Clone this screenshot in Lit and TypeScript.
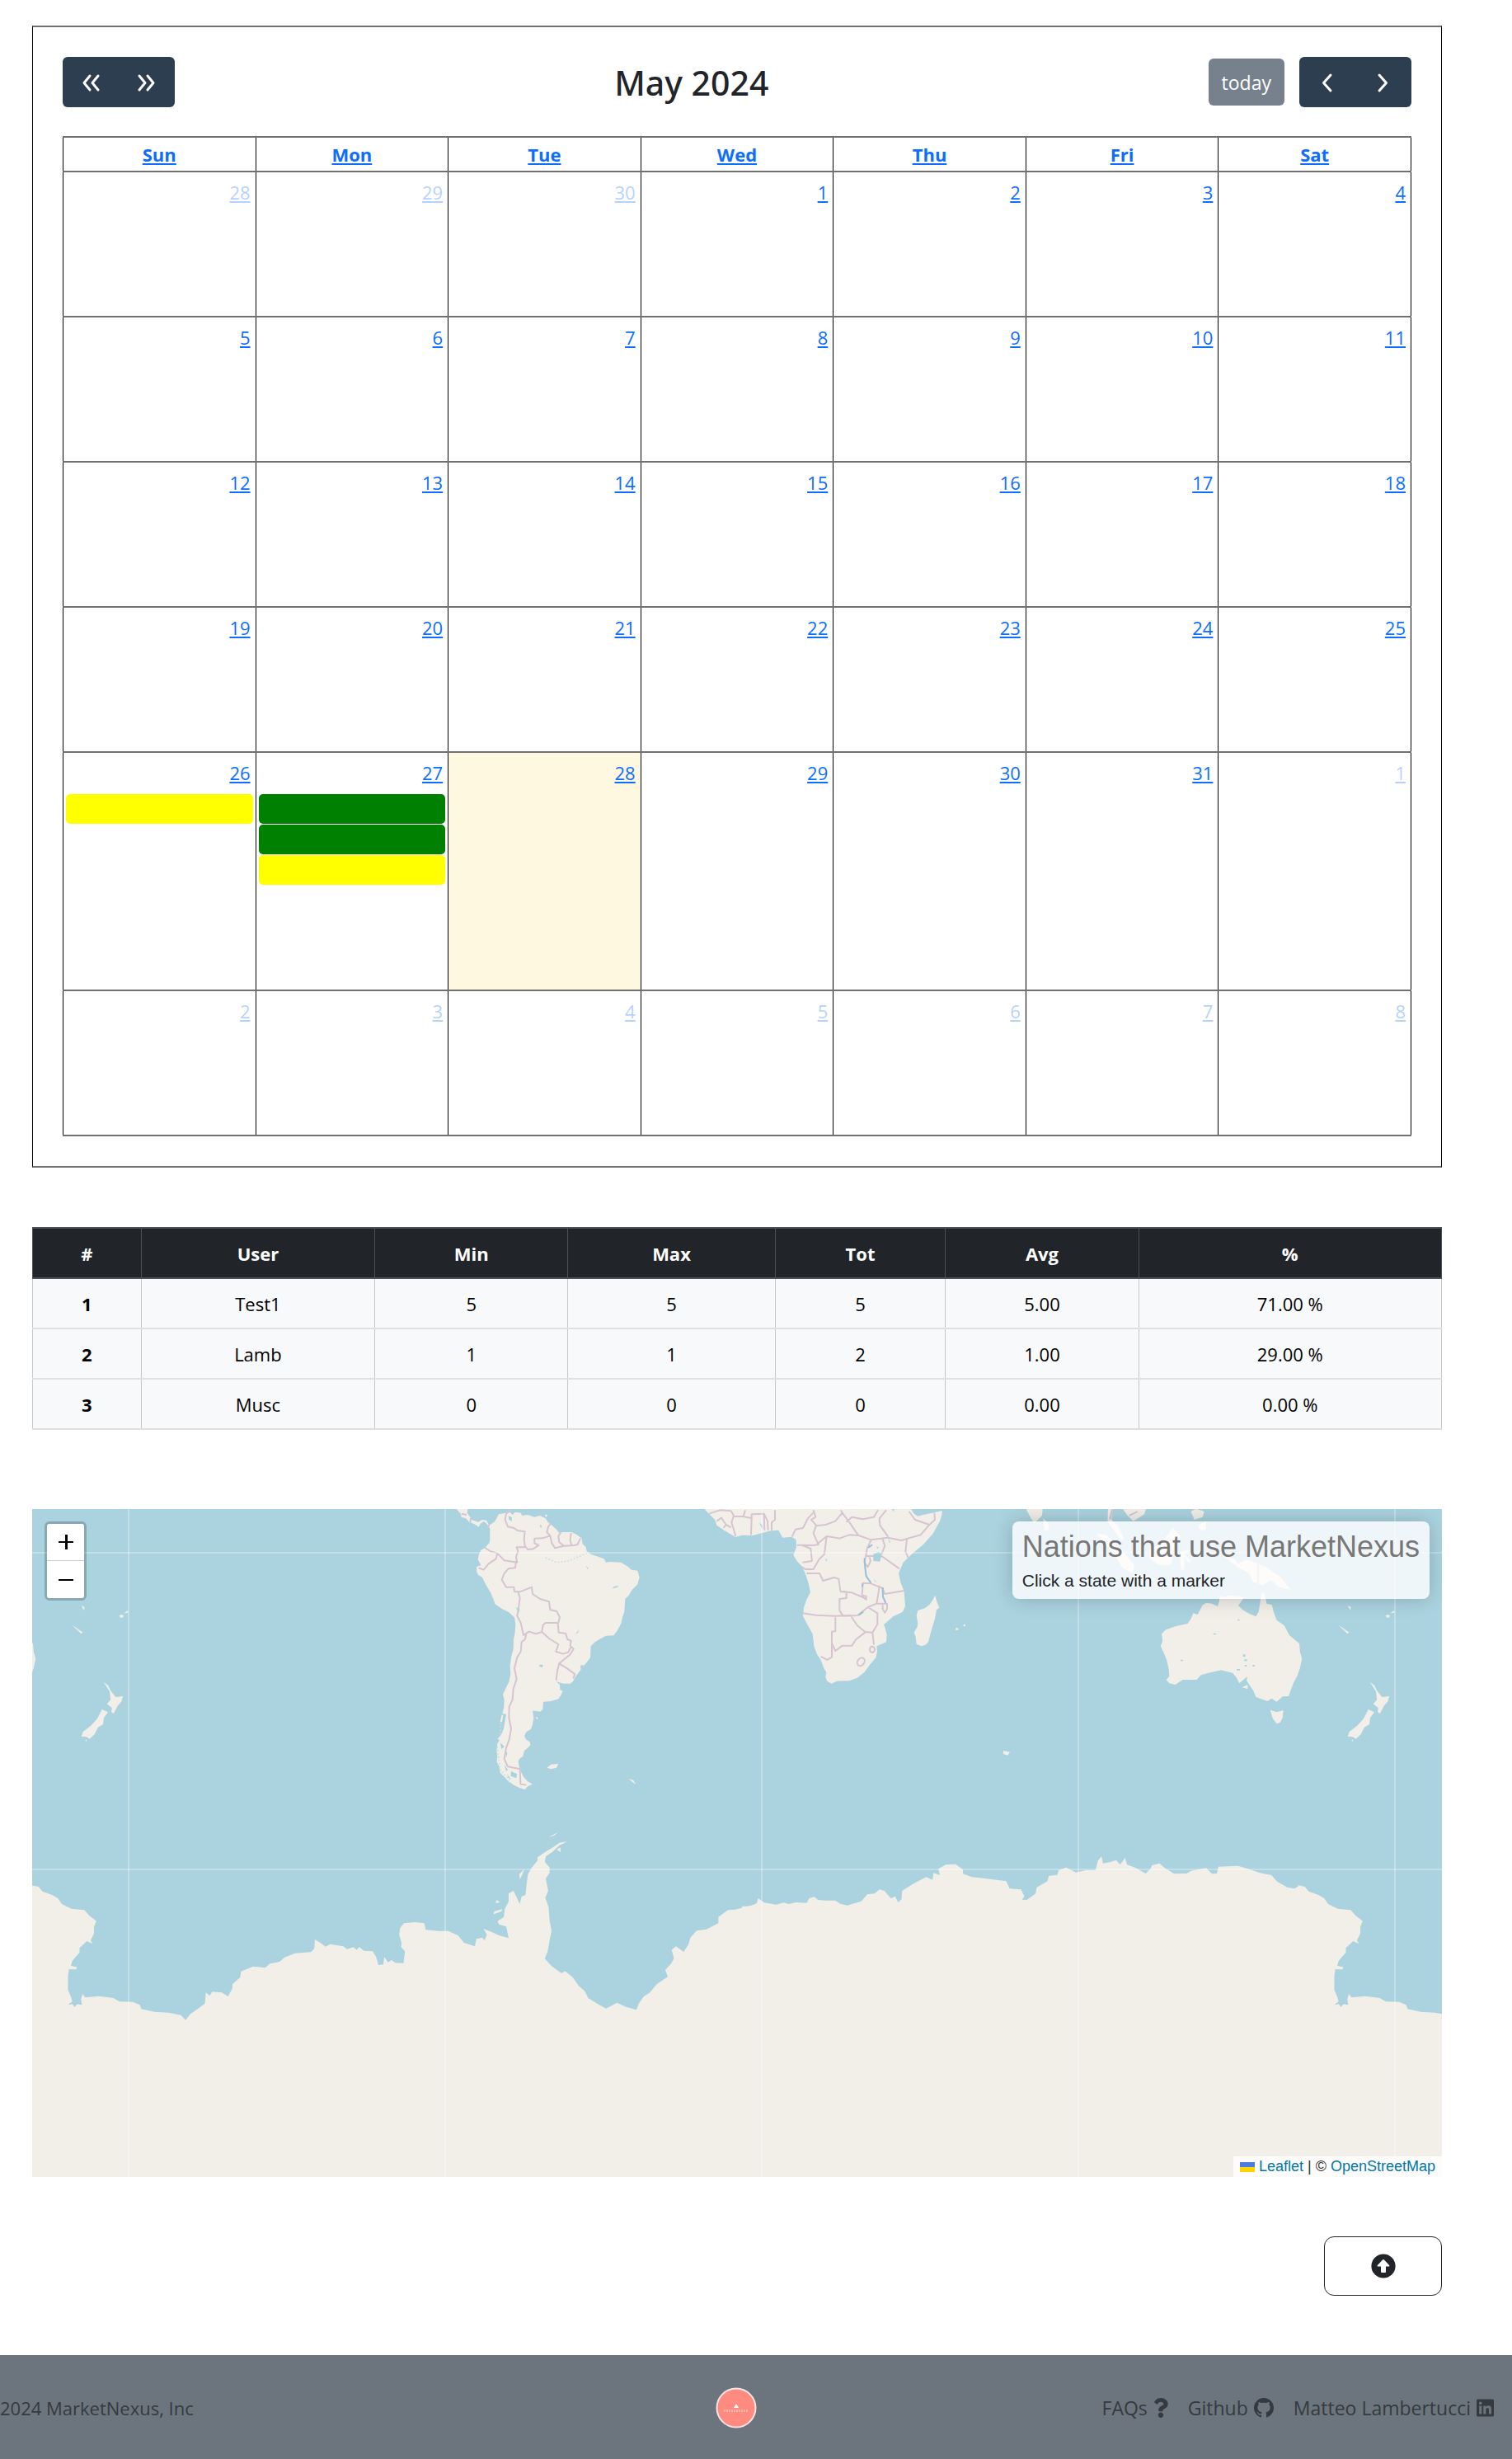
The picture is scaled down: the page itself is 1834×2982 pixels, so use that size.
import { LitElement, html, svg, css, nothing } from "lit";
import { customElement } from "lit/decorators.js";
import { classMap } from "lit/directives/class-map.js";

const WEEKDAYS = ["Sun", "Mon", "Tue", "Wed", "Thu", "Fri", "Sat"];

interface Day {
  label: number;
  other: boolean;
  today: boolean;
  events: string[];
}

/** Six weeks starting on Sunday 28 April 2024. */
function buildWeeks(): Day[][] {
  const events: Record<string, string[]> = {
    "4-26": ["yellow"],
    "4-27": ["green", "green", "yellow"],
  };
  return Array.from({ length: 6 }, (_, w) =>
    Array.from({ length: 7 }, (_, d) => {
      const date = new Date(2024, 3, 28 + w * 7 + d);
      return {
        label: date.getDate(),
        other: date.getMonth() !== 4,
        today: date.getMonth() === 4 && date.getDate() === 28,
        events: events[`${date.getMonth()}-${date.getDate()}`] ?? [],
      };
    })
  );
}

@customElement("market-calendar")
export class MarketCalendar extends LitElement {
  static styles = css`
    :host {
      display: block;
      box-sizing: border-box;
      border-style: solid;
      border-width: 2px 1px;
      border-color: #707070 #000;
      padding: 36px;
    }
    .toolbar {
      display: flex;
      align-items: center;
      justify-content: space-between;
      margin-bottom: 35px;
    }
    .title {
      margin: 0;
      font-family: "Noto Sans", "Open Sans", sans-serif;
      font-size: 41px;
      font-weight: 500;
      line-height: 48px;
      color: #212529;
    }
    .right {
      display: flex;
      align-items: center;
      gap: 18px;
    }
    .group {
      display: flex;
      border-radius: 6px;
      overflow: hidden;
    }
    button {
      border: 0;
      margin: 0;
      padding: 0;
      font: inherit;
      color: #fff;
      background: #2c3e50;
    }
    .nav {
      display: flex;
      align-items: center;
      justify-content: center;
      width: 68px;
      height: 61px;
    }
    .nav svg {
      width: 36px;
      height: 36px;
      fill: none;
      stroke: #fff;
      stroke-width: 3;
      stroke-linecap: round;
      stroke-linejoin: round;
    }
    .today-btn {
      height: 57px;
      padding: 0 16px;
      border-radius: 6px;
      font-size: 23px;
      background: #76818d;
    }
    table {
      width: 100%;
      table-layout: fixed;
      border-collapse: collapse;
    }
    th,
    td {
      padding: 0;
      border-style: solid;
      border-width: 2px 1px;
      border-color: #707070 #000;
      vertical-align: top;
    }
    .head {
      height: 42px;
    }
    .head th {
      vertical-align: middle;
      line-height: 36px;
    }
    .week {
      height: 176px;
    }
    .week.busy {
      height: 289px;
    }
    a {
      color: #0d6efd;
    }
    .num {
      padding: 6px;
      text-align: right;
      line-height: 36px;
    }
    .other .num {
      opacity: 0.3;
    }
    .today {
      background: #fff8e1;
    }
    .events {
      display: grid;
      gap: 1px;
      margin: 2px 3px 0;
    }
    .event {
      height: 36px;
      border-radius: 5px;
    }
    .yellow {
      background: #ff0;
    }
    .green {
      background: #008000;
    }
  `;

  private weeks = buildWeeks();

  private icon(d: string) {
    return html`<svg viewBox="0 0 36 36" aria-hidden="true"><path d=${d}></path></svg>`;
  }

  render() {
    return html`
      <div class="toolbar">
        <div class="group">
          <button class="nav" aria-label="Previous year">
            ${this.icon("M17 10L10 18.500L17 27M27 10L20 18.500L27 27")}
          </button>
          <button class="nav" aria-label="Next year">
            ${this.icon("M9 10L16 18.500L9 27M19 10L26 18.500L19 27")}
          </button>
        </div>
        <h2 class="title">May 2024</h2>
        <div class="right">
          <button class="today-btn">today</button>
          <div class="group">
            <button class="nav" aria-label="Previous month">
              ${this.icon("M22 9L13.500 18.500L22 28")}
            </button>
            <button class="nav" aria-label="Next month">
              ${this.icon("M13 9L21.500 18.500L13 28")}
            </button>
          </div>
        </div>
      </div>
      <table>
        <thead>
          <tr class="head">
            ${WEEKDAYS.map((d) => html`<th scope="col"><a href="#">${d}</a></th>`)}
          </tr>
        </thead>
        <tbody>
          ${this.weeks.map(
            (week) => html`<tr
              class=${classMap({ week: true, busy: week.some((d) => d.events.length > 0) })}
            >
              ${week.map(
                (d) => html`<td class=${classMap({ other: d.other, today: d.today })}>
                  <div class="num"><a href="#">${d.label}</a></div>
                  ${d.events.length
                    ? html`<div class="events">
                        ${d.events.map((e) => html`<div class="event ${e}"></div>`)}
                      </div>`
                    : nothing}
                </td>`
              )}
            </tr>`
          )}
        </tbody>
      </table>
    `;
  }
}

@customElement("market-stats")
export class MarketStats extends LitElement {
  static styles = css`
    :host {
      display: block;
    }
    table {
      width: 100%;
      table-layout: fixed;
      border-collapse: collapse;
      text-align: center;
      line-height: 36px;
    }
    .c-id {
      width: 7.7%;
    }
    .c-user {
      width: 16.6%;
    }
    .c-min {
      width: 13.7%;
    }
    .c-max {
      width: 14.700%;
    }
    .c-tot {
      width: 12.1%;
    }
    .c-avg {
      width: 13.7%;
    }
    tr {
      height: 61px;
    }
    th,
    td {
      padding: 0 12px;
      border-style: solid;
      border-width: 2px 1px;
    }
    thead th {
      color: #fff;
      background: #212529;
      border-color: #4d5154;
    }
    tbody th,
    tbody td {
      color: #000;
      background: #f8f9fa;
      border-color: #dfe0e1 #c6c7c8;
    }
  `;

  private cols = ["#", "User", "Min", "Max", "Tot", "Avg", "%"];
  private rows = [
    ["1", "Test1", "5", "5", "5", "5.00", "71.00 %"],
    ["2", "Lamb", "1", "1", "2", "1.00", "29.00 %"],
    ["3", "Musc", "0", "0", "0", "0.00", "0.00 %"],
  ];

  render() {
    return html`<table>
      <colgroup>
        <col class="c-id" />
        <col class="c-user" />
        <col class="c-min" />
        <col class="c-max" />
        <col class="c-tot" />
        <col class="c-avg" />
        <col />
      </colgroup>
      <thead>
        <tr>
          ${this.cols.map((c) => html`<th scope="col">${c}</th>`)}
        </tr>
      </thead>
      <tbody>
        ${this.rows.map(
          ([id, ...rest]) => html`<tr>
            <th scope="row">${id}</th>
            ${rest.map((v) => html`<td>${v}</td>`)}
          </tr>`
        )}
      </tbody>
    </table>`;
  }
}

const SOUTH_AMERICA =
  "M40 50L58 70L58 80L75 85L88 98L105 105L122 116L128 104L140 97L150 103L156 112L163 122L163 165L160 175L145 192L130 200L123 215L119 235L125 245L130 255L114 262L115 280L120 290L135 300L150 330L165 355L175 378L182 397L205 413L230 425L252 445L256 470L254 500L249 525L248 560L240 590L236 625L238 650L232 680L222 700L210 725L215 745L214 770L208 795L222 797L218 820L213 850L205 870L190 888L198 890L190 905L187 930L190 950L188 970L197 990L200 1010L215 1025L230 1042L250 1055L270 1065L290 1072L300 1060L318 1052L300 1042L285 1025L275 1005L270 990L266 970L270 960L283 950L288 930L300 920L310 910L308 898L295 890L288 877L295 862L312 852L318 835L322 810L318 785L330 785L345 788L355 780L357 752L385 750L412 742L420 730L428 713L418 708L417 690L403 678L430 686L455 686L465 678L475 660L490 640L510 615L528 592L530 550L545 535L565 523L585 512L613 511L625 495L640 468L645 445L652 425L655 378L668 365L680 345L700 325L707 300L700 275L678 272L660 257L640 245L600 243L585 245L578 232L550 222L530 215L515 205L512 190L500 178L497 158L480 145L460 135L430 135L415 138L405 125L390 112L375 100L365 85L345 75L325 80L300 72L280 75L275 65L255 62L245 72L235 62L220 65L195 70L187 85L180 97L160 110L150 92L135 90L120 98L95 90L92 82L80 65L82 50Z";
const SOUTH_AMERICA_BORDERS =
  "M240 55L222 68L218 90L228 115L250 120L265 130L290 133L287 160L290 185L300 198L320 196L340 183L325 175L325 158L355 157L382 148L370 135L375 115L385 103M382 148L388 175L400 193L432 185L470 183L482 180L492 158M432 185L415 172L412 150L420 137M458 138L455 165L460 183M295 190L260 190L265 205L258 225L262 245L215 238L190 212L165 205L145 192M190 212L185 232L158 250L140 272L122 265M258 240L255 265L230 268L215 285L206 308L222 335L250 335L252 352L272 352L315 335L318 360L345 378L378 388L382 418L405 422L417 445L410 470L413 500L438 503L445 525L458 530L455 548L467 560L455 580L415 613L445 632L472 652L466 667M265 352L272 375L268 405L262 440L275 465L285 510L305 497L330 505L352 498L356 473L365 465L408 465M352 498L378 522L412 543L403 570L430 578L448 572L458 552M415 613L408 640L404 675M60 68L78 72M92 84L92 100M160 108L156 118M295 508L290 525L278 535L275 570L262 590L252 630L260 670L248 705L245 745L233 770L232 810L240 850L233 890L222 920L215 960L228 988L272 997L274 1052L295 1055";
const AFRICA =
  "M72 50L90 68L112 90L118 110L145 128L165 140L187 153L210 146L250 147L283 138L315 130L343 128L358 155L390 152L407 162L408 190L397 218L410 240L430 262L442 290L453 325L459 355L445 380L435 410L432 440L450 475L467 505L472 550L483 580L497 600L508 630L517 645L514 662L520 677L536 686L555 677L600 676L630 665L655 645L675 618L697 592L702 570L700 550L735 535L737 508L730 480L726 472L760 442L795 425L804 405L800 350L788 320L780 285L797 245L830 213L870 180L905 140L930 95L938 70L938 57L910 64L870 72L850 77L836 68L825 50ZM913 365L920 390L928 410L918 418L912 450L900 490L888 535L878 545L862 550L845 542L842 515L836 500L848 480L850 465L845 440L850 420L875 412L893 398L905 380Z";
const AFRICA_BORDERS =
  "M90 68L130 55L170 58L180 75L172 100L180 125L187 150M118 95L135 83L152 108L170 118M143 120L152 108M180 77L215 78L222 55M215 78L245 85L243 145M245 85L245 70L290 68L292 128M290 68L303 95L305 128M318 128L318 100L330 90L330 55M392 152L405 125L432 120L450 85L475 58M470 55L478 80L462 90L480 110L470 140L488 180L470 183L430 182L410 182M480 112L515 108L550 95L575 65L570 55M575 65L600 98L632 145M590 98L610 80L650 88L690 80L705 55M488 175L518 150L565 158L600 145L635 147L680 163L740 155L790 165L860 145L892 108L840 90L818 60M892 108L912 90L910 65M735 55L710 85L712 110L742 152M518 150L510 215L490 235L470 270L440 270L430 262M430 245L465 240L460 195L430 183M445 285L492 285L505 312L545 300L562 305L568 350L590 352L590 375L565 378L565 420L578 440L630 438L668 408L700 395L710 335L680 322L650 320L647 365M568 352L610 355L650 372L662 380L662 368L647 365M432 430L480 437L550 440L605 438L630 475L658 498L685 500L703 470L703 430L668 408M550 445L550 495L537 497L537 590L520 600L497 588M537 540L550 567L575 548L610 548L625 525L658 500M685 500L690 545M705 330L722 340L730 360L800 348M700 395L738 395L738 415L730 428L722 415L722 400M663 222L718 222L783 268M722 160L730 185L718 215M810 162L805 205L815 228M680 163L665 195L660 228L655 245L668 262L678 240L674 226";
const OCEANIA =
  "M652 392L668 395L685 405L690 385L692 365L705 372L720 365L745 368L765 372L757 385L747 402L760 418L780 432L800 442L808 425L812 395L815 365L820 350L828 370L832 395L848 400L853 425L862 455L885 475L900 510L930 540L932 570L938 595L932 630L925 655L912 685L903 715L898 732L880 733L862 752L847 740L835 750L800 735L792 712L780 690L772 675L774 660L766 668L750 685L742 665L730 647L695 637L655 648L635 655L622 672L580 672L558 690L540 685L531 672L540 660L538 630L532 600L522 570L514 550L520 530L517 505L530 490L560 477L595 468L605 450L612 430L625 435L640 400ZM758 700L775 690L775 705ZM843 782L862 790L882 783L880 810L872 828L862 832L850 812ZM1142 680L1155 692L1163 712L1178 735L1200 732L1195 752L1185 765L1172 795L1165 790L1167 775L1152 760L1163 745L1160 715ZM1137 780L1155 790L1143 810L1140 835L1125 845L1115 870L1100 887L1090 880L1075 878L1080 862L1105 838L1122 815ZM702 222L735 232L745 250L775 235L830 262L850 280L870 295L905 345L870 335L845 310L820 328L790 315L780 285L745 262ZM322 140L350 145L400 200L435 255L430 285L400 265L375 215L345 175ZM356 50L370 50L367 90L385 110L405 160L395 165L375 130L355 95ZM480 200L520 170L550 120L575 150L555 180L545 255L510 255L482 230ZM110 50L160 50L158 75L135 103L125 85ZM162 85L178 105L180 125L165 130ZM400 50L470 50L465 70L432 95L415 75ZM428 290L470 292L500 305L495 312L440 305ZM575 205L610 198L585 215L605 240L598 245L585 230L585 275L575 270L572 235ZM605 60L620 50L645 60L640 80L615 90ZM625 110L650 95L650 125L635 130ZM1048 474L1056 480L1080 500L1074 504ZM1075 402L1085 408L1083 420ZM1188 440L1195 434L1203 440L1196 448ZM1203 430L1215 420L1215 428ZM42 930L62 935L55 947L42 942ZM1087 890L1092 890L1089 898Z";
const ANTARCTICA_WEST =
  "M66 250L80 255L88 272L108 285L120 297L128 318L148 335L175 340L185 360L200 380L195 400L195 425L188 450L192 462L180 453L165 478L165 495L158 508L150 525L147 542L160 548L158 556L143 555L141 580L141 630L147 655L150 672L141 685L150 682L155 693L160 682L170 685L168 665L171 645L177 658L205 653L235 660L248 673L275 674L290 685L293 700L320 710L350 713L375 722L385 740L395 718L410 700L425 680L427 640L435 652L440 637L460 640L473 654L482 625L482 610L498 585L500 563L525 545L550 550L560 535L580 528L590 512L612 497L645 493L652 480L653 447L665 460L675 473L685 464L712 472L720 482L733 475L740 485L745 474L755 488L773 490L780 510L785 540L795 538L797 510L805 530L812 522L820 532L837 533L840 490L832 475L833 460L828 430L830 405L838 388L860 384L880 388L883 412L910 416L930 416L950 432L962 458L985 472L988 445L1000 440L1005 450L1010 430L1003 408L1020 420L1035 432L1055 442L1050 400L1035 392L1032 380L1045 365L1047 335L1055 310L1055 280L1065 270L1072 295L1078 318L1082 290L1090 285L1092 250L1095 210L1103 185L1115 160L1115 148L1130 130L1150 108L1160 95L1177 90L1160 105L1148 125L1132 145L1130 165L1140 185L1140 205L1132 225L1137 270L1131 295L1138 330L1140 380L1144 415L1140 450L1136 490L1130 517L1145 545L1165 570L1172 562L1188 585L1200 615L1213 635L1220 660L1240 682L1257 698L1280 677L1298 692L1320 703L1325 680L1335 655L1348 640L1362 610L1385 583L1380 557L1392 535L1398 515L1393 485L1402 472L1418 492L1428 465L1432 440L1445 415L1465 410L1490 388L1490 365L1510 340L1525 338L1555 325L1568 318L1568 1320L66 1320ZM1078 228L1077 210L1088 190L1082 215ZM1024 355L1025 345L1042 336L1040 345ZM1028 315L1030 303L1037 312ZM1155 120L1162 112L1163 130ZM1138 75L1157 57L1150 68Z";
const ANTARCTICA_EAST =
  "M0 327L20 325L30 315L33 297L45 313L70 320L85 313L95 318L110 312L132 314L137 297L147 292L155 303L170 305L190 305L200 317L215 323L225 317L243 308L255 283L270 280L280 265L290 270L303 297L312 290L318 312L325 300L326 270L350 243L375 220L388 230L390 205L403 213L400 190L415 175L435 173L450 193L450 208L468 220L495 225L538 235L545 262L568 265L575 290L570 302L580 303L598 280L600 258L622 235L625 215L642 212L645 195L660 185L680 203L700 195L720 195L725 160L732 145L735 170L750 165L762 158L770 175L780 150L784 175L800 185L822 207L832 190L835 177L850 170L862 188L880 208L905 207L915 197L945 187L957 208L967 207L970 182L1010 179L1030 190L1055 205L1078 213L1090 237L1110 257L1125 262L1135 252L1135 1320L0 1320Z";

@customElement("nations-map")
export class NationsMap extends LitElement {
  static styles = css`
    :host {
      display: block;
      position: relative;
      height: 810px;
      overflow: hidden;
      background: #aad3df;
      font-family: "Liberation Sans", Arial, sans-serif;
    }
    .canvas {
      display: block;
      width: 100%;
      height: 100%;
    }
    .land {
      fill: #f2efe9;
    }
    .border {
      fill: none;
      stroke: #d6c5d1;
      stroke-width: 6;
      stroke-linejoin: round;
    }
    .fjord {
      fill: none;
      stroke: #c9dfe2;
      stroke-width: 5;
      stroke-dasharray: 5 7;
    }
    .lake {
      fill: #aad3df;
    }
    .river {
      fill: none;
      stroke: #97bfd8;
      stroke-width: 6;
      stroke-linecap: round;
    }
    .seam {
      stroke: #fff;
      stroke-opacity: 0.3;
      stroke-width: 2;
    }
    .zoom {
      position: absolute;
      top: 15px;
      left: 15px;
      display: grid;
      border: 3px solid rgba(0, 0, 0, 0.2);
      border-radius: 6px;
      background-clip: padding-box;
      overflow: hidden;
    }
    .zoom button {
      display: flex;
      align-items: center;
      justify-content: center;
      width: 45px;
      height: 45px;
      padding: 0;
      border: 0;
      background: #fff;
    }
    .zoom button:first-child {
      border-bottom: 1px solid #ccc;
    }
    .zoom svg {
      width: 18px;
      height: 18px;
    }
    .info {
      position: absolute;
      top: 15px;
      right: 15px;
      box-sizing: border-box;
      height: 94px;
      padding: 9px 12px;
      border-radius: 8px;
      background: rgba(255, 255, 255, 0.8);
      box-shadow: 0 0 23px rgba(0, 0, 0, 0.2);
      color: #212529;
    }
    .info h4 {
      margin: 0 0 8px;
      font-size: 36px;
      line-height: 43px;
      font-weight: 400;
      color: #777;
    }
    .info p {
      margin: 0;
      font-size: 21px;
      line-height: 24px;
    }
    .credit {
      position: absolute;
      right: 0;
      bottom: 0;
      display: flex;
      align-items: center;
      gap: 5px;
      padding: 0 8px;
      font-size: 18px;
      line-height: 25px;
      color: #333;
      background: rgba(255, 255, 255, 0.8);
    }
    .credit a {
      display: inline-flex;
      align-items: center;
      gap: 5px;
      color: #0078a8;
      text-decoration: none;
    }
    .flag {
      width: 18px;
      height: 12px;
    }
  `;

  private oceania(x: number) {
    return svg`<g transform="translate(${x} 1810) scale(.4043 .3333)">
      <path class="land" d=${OCEANIA}></path>
      <path class="border" d="M806 245L806 322M420 75L445 60M362 88L368 52"></path>
      <path class="lake" d="M672 503h8v5h-8zM745 452h6v5h-6zM574 599h7v5h-7zM761 580h7v8h-7zM765 598h8v6h-8zM766 618h6v6h-6zM790 618h6v6h-6zM742 633h10v5h-10z"></path>
    </g>`;
  }

  private antarcticaWest(x: number) {
    return svg`<path class="land" transform="translate(${x} 2200) scale(.5848 .3333)" d=${ANTARCTICA_WEST}></path>`;
  }

  render() {
    return html`
      <svg class="canvas" viewBox="39 1827 1710 810" preserveAspectRatio="xMidYMin slice" role="img" aria-label="World map">
        <g transform="translate(540 1810) scale(.3333)">
          <path class="land" d=${SOUTH_AMERICA}></path>
          <path class="land" d="M370 992L385 980L412 978L405 992L385 997ZM668 1032L685 1038L694 1053L682 1045ZM362 72L372 72L368 82ZM328 808L338 810L335 817ZM200 825L206 800L211 800L207 826Z"></path>
          <path class="border" d=${SOUTH_AMERICA_BORDERS}></path>
          <path class="lake" d="M230 75L243 82L242 95L232 90ZM344 108L352 112L348 122ZM256 408L270 414L270 428ZM342 617L356 617L354 627L344 625ZM608 340L615 332L630 330L626 336ZM474 506L486 490L484 500ZM512 257L521 266L518 270ZM200 900L215 915L205 925ZM218 925L226 940L222 955ZM215 980L228 1000L222 1005ZM240 1005L262 1015L258 1030L238 1022ZM225 1015L240 1035L230 1030ZM492 620L505 618L494 638Z"></path>
          <path class="fjord" d="M203 830L200 880M190 915L200 1000L240 1045M365 228L405 245L450 240L490 222L525 208"></path>
        </g>
        <g transform="translate(830 1810) scale(.3333)">
          <path class="land" d=${AFRICA}></path>
          <path class="land" d="M988 484h9v7h-9zM1016 471h7v7h-7z"></path>
          <path class="border" d=${AFRICA_BORDERS}></path>
          <ellipse class="border" cx="643" cy="607" rx="12" ry="16" transform="rotate(35 643 607)"></ellipse>
          <ellipse class="border" cx="684" cy="562" rx="9" ry="11"></ellipse>
          <path class="lake" d="M688 215L705 207L720 212L712 242L688 240ZM740 155L752 175L746 172ZM700 187L710 192L702 194ZM688 305L702 318L694 314ZM272 100L285 110L284 125ZM754 50L764 50L762 60ZM512 230L520 236L517 242Z"></path>
          <path class="river" d="M656 232L658 262L662 295L678 318M722 338L723 370L732 390M672 190L682 182M636 436L650 426M649 324L648 332"></path>
        </g>
        ${this.oceania(1200)} ${this.oceania(-336)} ${this.antarcticaWest(0)}
        <path class="land" transform="translate(900 2200) scale(.5957 .3333)" d=${ANTARCTICA_EAST}></path>
        ${this.antarcticaWest(1536)}
        ${[156, 540, 924, 1308, 1692].map(
          (x) => svg`<line class="seam" x1=${x} x2=${x} y1="1827" y2="2637"></line>`
        )}
        ${[1880, 2264].map(
          (y) => svg`<line class="seam" x1="39" x2="1749" y1=${y} y2=${y}></line>`
        )}
      </svg>
      <div class="zoom">
        <button aria-label="Zoom in">
          <svg viewBox="0 0 18 18"><path d="M0 8h18v2H0zM8 0h3v18H8z"></path></svg>
        </button>
        <button aria-label="Zoom out">
          <svg viewBox="0 0 18 18"><path d="M0 8h18v2H0z"></path></svg>
        </button>
      </div>
      <div class="info">
        <h4>Nations that use MarketNexus</h4>
        <p>Click a state with a marker</p>
      </div>
      <div class="credit">
        <a href="#">
          <svg class="flag" viewBox="0 0 12 8" preserveAspectRatio="none" aria-hidden="true">
            <path fill="#4C7BE1" d="M0 0h12v4H0z"></path>
            <path fill="#FFD500" d="M0 4h12v4H0z"></path></svg
          >Leaflet</a
        >
        <span>|</span><span>©</span><a href="#">OpenStreetMap</a>
      </div>
    `;
  }
}

@customElement("site-footer")
export class SiteFooter extends LitElement {
  static styles = css`
    :host {
      display: block;
      background: #6c757d;
      color: #343a3f;
    }
    .row {
      display: grid;
      grid-template-columns: 1fr auto 1fr;
      align-items: center;
      height: 128px;
      margin: 0 22px 0 -26px;
      line-height: 36px;
    }
    .copy {
      margin: 0;
      padding-left: 26px;
    }
    .logo {
      display: block;
      width: 50px;
      height: 50px;
    }
    nav {
      display: flex;
      justify-content: flex-end;
      gap: 24px;
      font-size: 23px;
    }
    nav a {
      display: flex;
      align-items: center;
      gap: 7px;
      color: inherit;
      text-decoration: none;
      white-space: nowrap;
    }
    nav svg {
      height: 24px;
      fill: currentColor;
    }
  `;

  render() {
    return html`<footer class="row">
      <p class="copy">2024 MarketNexus, Inc</p>
      <a href="#" aria-label="MarketNexus home">
        <svg class="logo" viewBox="0 0 50 50">
          <circle cx="25" cy="25" r="23.500" fill="#ff8a80" stroke="#f6e4e2" stroke-width="2"></circle>
          <path fill="#fff" d="M25 20L28 25H22Z"></path>
          <path
            fill="none"
            stroke="#ffb3ac"
            stroke-width="3"
            stroke-dasharray="2 1"
            d="M10 28.500H40"
          ></path>
        </svg>
      </a>
      <nav>
        <a href="#"
          >FAQs
          <svg viewBox="0 0 384 512" aria-hidden="true">
            <path
              d="M202.021 0C122.202 0 70.503 32.703 29.914 91.026c-7.363 10.580-5.093 25.086 5.178 32.874l43.138 32.709c10.373 7.865 25.132 6.026 33.253-4.148 25.049-31.381 43.630-49.449 82.757-49.449 30.764 0 68.816 19.799 68.816 49.631 0 22.552-18.617 34.134-48.993 51.164-35.423 19.860-82.299 44.576-82.299 106.405V320c0 13.255 10.745 24 24 24h72.471c13.255 0 24-10.745 24-24v-5.773c0-42.860 125.268-44.645 125.268-160.627C377.504 66.256 286.902 0 202.021 0zM192 373.459c-38.196 0-69.271 31.075-69.271 69.271 0 38.195 31.075 69.270 69.271 69.270s69.271-31.075 69.271-69.271-31.075-69.270-69.271-69.270z"
            ></path></svg
        ></a>
        <a href="#"
          >Github
          <svg viewBox="0 0 16 16" aria-hidden="true">
            <path
              d="M8 0C3.58 0 0 3.58 0 8c0 3.54 2.29 6.53 5.47 7.59.4.07.55-.17.55-.38 0-.19-.01-.82-.01-1.49-2.01.37-2.53-.49-2.69-.94-.09-.23-.48-.94-.82-1.13-.28-.15-.68-.52-.01-.53.63-.01 1.08.58 1.23.82.72 1.21 1.87.87 2.33.66.07-.52.28-.87.51-1.07-1.78-.2-3.64-.89-3.64-3.95 0-.87.31-1.59.82-2.15-.08-.2-.36-1.02.08-2.12 0 0 .67-.21 2.2.82.64-.18 1.32-.27 2-.27s1.36.09 2 .27c1.53-1.04 2.2-.82 2.2-.82.44 1.1.16 1.92.08 2.12.51.56.82 1.27.82 2.15 0 3.07-1.87 3.75-3.65 3.95.29.25.54.73.54 1.48 0 1.07-.01 1.93-.01 2.2 0 .21.15.46.55.38A8.01 8.01 0 0 0 16 8c0-4.42-3.58-8-8-8"
            ></path></svg
        ></a>
        <a href="#"
          >Matteo Lambertucci
          <svg viewBox="0 0 448 512" aria-hidden="true">
            <path
              d="M416 32H31.9C14.3 32 0 46.5 0 64.3v383.4C0 465.5 14.3 480 31.9 480H416c17.6 0 32-14.5 32-32.3V64.3c0-17.8-14.4-32.3-32-32.3zM135.4 416H69V202.2h66.5V416zm-33.2-243c-21.3 0-38.5-17.3-38.5-38.5S80.9 96 102.2 96c21.2 0 38.5 17.3 38.5 38.5 0 21.3-17.2 38.5-38.5 38.5zm282.1 243h-66.4V312c0-24.8-.5-56.7-34.5-56.7-34.6 0-39.9 27-39.9 54.9V416h-66.4V202.2h63.7v29.2h.9c8.9-16.8 30.6-34.5 62.2-34.5 66.5 0 78.900 43.8 78.900 100.9V416z"
            ></path></svg
        ></a>
      </nav>
    </footer>`;
  }
}

@customElement("app-root")
export class AppRoot extends LitElement {
  static styles = css`
    :host {
      display: block;
      font-family: "Open Sans", "Noto Sans", sans-serif;
      font-size: 22px;
      line-height: 36px;
      color: #212529;
      background: #fff;
    }
    main {
      display: flex;
      flex-direction: column;
      gap: 72px;
      padding: 31px 85px 72px 39px;
    }
    nations-map {
      margin-top: 24px;
    }
    .top {
      align-self: flex-end;
      display: flex;
      align-items: center;
      justify-content: center;
      box-sizing: border-box;
      width: 143px;
      height: 72px;
      padding: 0;
      border: 1px solid #212529;
      border-radius: 12px;
      background: #fff;
    }
    .top svg {
      width: 30px;
      height: 30px;
    }
  `;

  render() {
    return html`
      <main>
        <market-calendar></market-calendar>
        <market-stats></market-stats>
        <nations-map></nations-map>
        <button class="top" aria-label="Back to top">
          <svg viewBox="0 0 30 30" aria-hidden="true">
            <circle cx="15" cy="15" r="14.600" fill="#212529"></circle>
            <path
              fill="#fff"
              d="M14.300 7.200Q15 6.600 15.700 7.200L22.300 14.200Q22.800 15.400 21.600 15.600H18V22Q18 23 17 23H13Q12 23 12 22V15.600H8.400Q7.200 15.400 7.700 14.200Z"
            ></path>
          </svg>
        </button>
      </main>
      <site-footer></site-footer>
    `;
  }
}
